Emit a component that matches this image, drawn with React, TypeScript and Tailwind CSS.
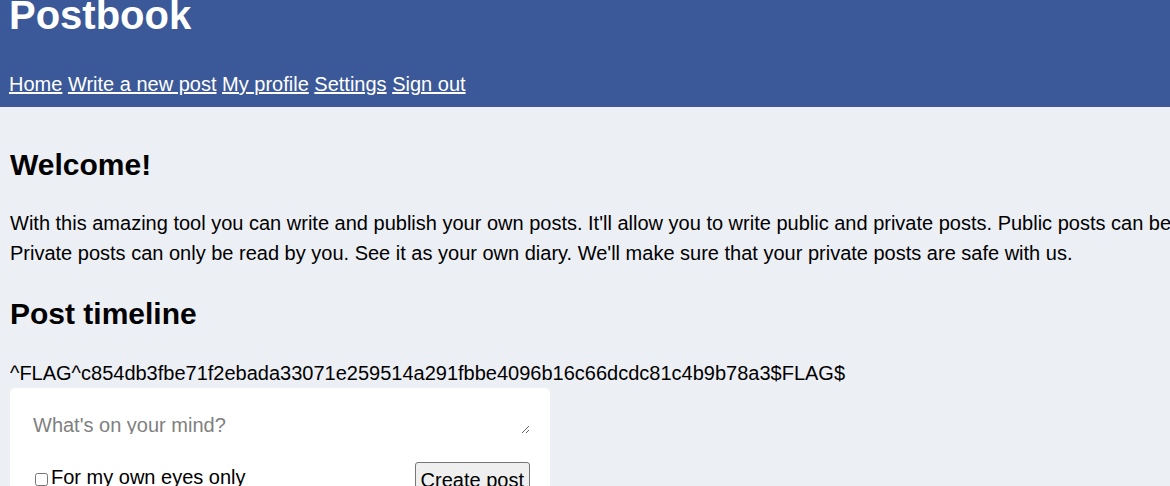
export default function App() {
  return (
    <div className="h-[486px] w-[1170px] overflow-hidden bg-[#eceff4] text-[20px] leading-[1.5] text-black font-['Liberation_Sans',Arial,sans-serif]">
      <div className="w-[1400px]">
        {/* Header */}
        <header className="flex h-[107px] flex-col bg-[#3b5998] px-[9px] text-white">
          <h1 className="mt-[-15px] text-[40px] font-bold leading-[60px]">Postbook</h1>
          <nav className="mt-[24px] leading-[30px]">
            <a href="#" className="underline">Home</a>{" "}
            <a href="#" className="underline">Write a new post</a>{" "}
            <a href="#" className="underline">My profile</a>{" "}
            <a href="#" className="underline">Settings</a>{" "}
            <a href="#" className="underline">Sign out</a>
          </nav>
        </header>

        {/* Main */}
        <main className="px-[10px]">
          <h2 className="pt-[35px] text-[30px] font-bold leading-[45px]">Welcome!</h2>
          <p className="mt-[21px] whitespace-nowrap">
            With this amazing tool you can write and publish your own posts. It'll allow you to write public and private posts. Public posts can be read by everyone.
            <br />
            Private posts can only be read by you. See it as your own diary. We'll make sure that your private posts are safe with us.
          </p>

          <h2 className="mt-[23px] text-[30px] font-bold leading-[45px]">Post timeline</h2>
          <p className="mt-[22px]">^FLAG^c854db3fbe71f2ebada33071e259514a291fbbe4096b16c66dcdc81c4b9b78a3$FLAG$</p>

          <div className="w-[540px] rounded-[5px] bg-white px-[20px] pt-[19px] pb-[20px]">
            <textarea
              rows={1}
              placeholder="What's on your mind?"
              className="block h-[27px] w-full resize-y overflow-hidden bg-transparent px-[3px] pt-[7px] pb-0 text-[20px] leading-[23px] outline-none placeholder:text-[#808080]"
            />
            <div className="mt-[28px] flex items-start justify-between">
              <label className="flex items-start gap-[3px] pl-[5px]">
                <input type="checkbox" className="mt-[11px] h-[13px] w-[13px]" />
                <span>For my own eyes only</span>
              </label>
              <button className="rounded-[3px] border border-[#767676] bg-[#efefef] px-[5px] py-[3px] leading-[28px]">
                Create post
              </button>
            </div>
          </div>
        </main>
      </div>
    </div>
  );
}
